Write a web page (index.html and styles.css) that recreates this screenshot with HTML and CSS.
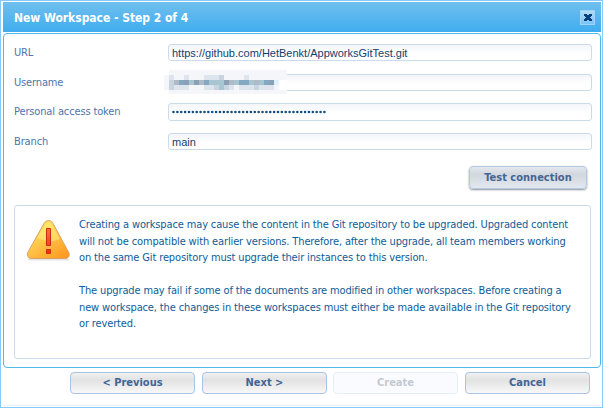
FILE: index.html
```html
<!DOCTYPE html>
<html lang="en">
<head>
<meta charset="utf-8">
<title>New Workspace</title>
<link rel="stylesheet" href="styles.css">
</head>
<body>
<main class="dialog">
  <header class="titlebar">
    <h1>New Workspace - Step 2 of 4</h1>
    <button class="close" aria-label="Close"><svg width="8" height="7" viewBox="0 0 8 7" shape-rendering="crispEdges"><path d="M0 0h3v1h2V0h3v2H7v1H6v1h1v1h1v2H5V6H3v1H0V5h1V4h1V3H1V2H0z" fill="#063b7c"/></svg></button>
  </header>
  <section class="panel">
    <div class="row"><label>URL</label><div class="field"><span>https://github.com/HetBenkt/AppworksGitTest.git</span></div></div>
    <div class="row r2"><label>Username</label><div class="field">
      <svg class="redacted" width="123" height="24" viewBox="0 0 123 24" shape-rendering="crispEdges"><path fill="#f4f6fa" d="M5 0h118v24H5zM0 5h5v15H0z"/><path fill="#fff" d="M115 10h8v10h-8z"/><path fill="#dde4ed" d="M5 5h5v5H5zM20 5h5v5h-5zM40 5h15v5H40zM80 5h5v5h-5zM10 15h15v5H10zM40 15h10v5H40zM65 15h5v5h-5zM75 15h15v5H75zM95 15h15v5H95z"/><path fill="#c9d4e1" d="M5 10h5v5H5zM55 5h5v5h-5zM5 15h5v5H5zM50 15h5v5h-5zM60 15h5v5h-5zM90 15h5v5h-5z"/><path fill="#afbac8" d="M10 10h5v5h-5zM35 10h5v5h-5zM65 10h5v5h-5zM90 10h5v5h-5z"/><path fill="#82a8c2" d="M15 10h5v5h-5zM40 10h5v5h-5zM75 10h5v5h-5zM80 10h5v5h-5zM100 10h5v5h-5z"/><path fill="#8b9fb5" d="M20 10h5v5h-5zM30 10h5v5h-5zM60 10h5v5h-5zM105 10h5v5h-5z"/><path fill="#a8c5d2" d="M25 10h5v5h-5zM45 10h15v5H45zM70 10h5v5h-5zM85 10h5v5h-5zM95 10h5v5h-5zM55 15h5v5h-5z"/><path fill="#dff0fc" d="M110 10h5v5h-5z"/></svg>
    </div></div>
    <div class="row r3"><label>Personal access token</label><div class="field"><svg width="155" height="4"><path d="M1.500 2h153" stroke="#174e80" stroke-width="2.600" stroke-linecap="round" stroke-dasharray="0 3.870"/></svg></div></div>
    <div class="row r4"><label>Branch</label><div class="field"><span>main</span></div></div>
    <div class="test-row"><button class="btn test">Test connection</button></div>
    <section class="notice">
      <svg class="warning" width="48" height="44" viewBox="0 0 48 44">
        <defs><linearGradient id="gold" x1="0" y1="0" x2=".8" y2="1"><stop offset="0" stop-color="#fff36a"/><stop offset=".55" stop-color="#ffc247"/><stop offset="1" stop-color="#ff9b20"/></linearGradient><linearGradient id="red" x2="0" y2="1"><stop stop-color="#ff7038"/><stop offset="1" stop-color="#f42a10"/></linearGradient></defs>
        <path d="M3 40.500h39" stroke="#e4e4e4" stroke-width="2" stroke-linecap="round"/>
        <path d="M18.500 3.500q4-4 8 0L43 34q1 4.500-3 5.500H5Q.5 38.500 1.500 34z" fill="url(#gold)" stroke="#dba168"/>
        <path d="M20 4.500q3-3 5.500 0L34 20Q24 25 11 19z" fill="#fff989" opacity=".45"/>
        <path d="M20.500 9.500h4v17h-4zM20.500 30.500h4v4h-4z" fill="url(#red)" stroke="#cf2a12"/>
      </svg>
      <div class="message">
        <p>Creating a workspace may cause the content in the Git repository to be upgraded. Upgraded content<br>will not be compatible with earlier versions. Therefore, after the upgrade, all team members working<br>on the same Git repository must upgrade their instances to this version.</p>
        <p>The upgrade may fail if some of the documents are modified in other workspaces. Before creating a<br>new workspace, the changes in these workspaces must either be made available in the Git repository<br>or reverted.</p>
      </div>
    </section>
  </section>
  <footer class="actions">
    <button class="btn">&lt; Previous</button>
    <button class="btn">Next &gt;</button>
    <button class="btn" disabled>Create</button>
    <button class="btn">Cancel</button>
  </footer>
</main>
</body>
</html>
```
FILE: styles.css
```css
* { box-sizing: border-box; }
body { margin: 0; font: 11px/16.5px "DejaVu Sans Condensed", "DejaVu Sans", sans-serif; font-stretch: condensed; color: #0e5c99; }
.dialog { width: 603px; height: 408px; border: 1px solid #86cbfb; padding: 1px 1px 0 2px; background: #fff; overflow: hidden; }
.titlebar { height: 30px; display: flex; align-items: center; justify-content: space-between; padding: 0 6px 0 11px; background: linear-gradient(#70bfee, #40adef); }
h1 { margin: 1px 0 0; font-size: 12px; line-height: 16px; letter-spacing: -.03px; color: #fff; white-space: nowrap; }
.close { width: 15px; height: 15px; padding: 0; border: 1px solid #9bd4f7; background: linear-gradient(#b2dcf6, #78c4f3); display: grid; place-items: center; }
.panel { height: 335px; width: 598px; margin-top: 1px; padding: 10px 9px 0 10px; border: 1px solid #52b7ea; border-radius: 4px; }
.row { display: grid; grid-template: 100% / 154px 424px; height: 17px; white-space: nowrap; }
.row label { color: #4b76aa; align-self: center; letter-spacing: -.14px; padding-top: 1px; }
.r2 { margin-top: 13px; }
.r3 { margin-top: 12px; height: 18px; }
.r4 { margin-top: 12px; }
.field { position: relative; display: flex; align-items: center; padding-left: 3px; border: 1px solid #ccdbea; border-radius: 3px; background: linear-gradient(#f3f5f9, #fff 60%); font: 11px/13px "Liberation Sans", Arial, sans-serif; color: #123e6c; }
.field span { padding-top: 2px; }
.redacted { position: absolute; left: -5px; top: -5px; }
.test-row { display: flex; justify-content: flex-end; margin: 16px 4px 0 0; }
.btn { width: 125px; height: 22px; padding: 0; border: 1px solid #a9c2e5; border-radius: 4px; background: linear-gradient(#f1f1f1, #e2e2e2 35%, #f8f8f8); font: bold 11px/16px "DejaVu Sans Condensed", "DejaVu Sans", sans-serif; font-stretch: condensed; color: #426594; white-space: nowrap; }
.btn:disabled { color: #c5cad1; border-color: #e6edf7; background: #fafbfe; }
.test { width: 118px; height: 23px; background: linear-gradient(#e4e8ee, #d2d7df 35%, #e3e7ee); border-color: #b4c7e2; box-shadow: 0 1px 2px #8a929c; }
.notice { width: 577px; height: 154px; margin-top: 16px; padding: 11px 0 0 11px; display: flex; border: 1px solid #cbdaea; border-radius: 3px; }
.warning { margin-top: 2px; flex: none; }
.message { margin-left: 5px; white-space: nowrap; letter-spacing: -.135px; }
p { margin: 0 0 16.5px; }
.actions { display: flex; gap: 7px; height: 38px; padding: 4px 0 0 67px; border-bottom: 1px solid #e5f0f8; }
.actions .btn:nth-child(3) { margin-left: -1px; }
```
